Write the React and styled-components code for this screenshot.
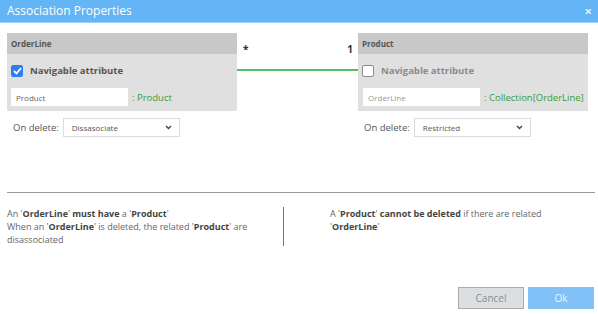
import React from 'react'
import styled, {createGlobalStyle} from 'styled-components'

const GlobalStyle = createGlobalStyle`
    html, body {
        margin: 0;
        padding: 0;
        background: #fff;
        font-family: "Open Sans", "Liberation Sans", sans-serif;
    }
`;

const Dialog = styled.div`
    width: 598px;
    height: 314px;
    display: flex;
    flex-direction: column;
    background: #fff;
    overflow: hidden;
`;

const TitleBar = styled.div`
    height: 22px;
    background: #64b5f6;
    display: flex;
    align-items: center;
    justify-content: space-between;
    padding: 0 6px 0 7px;
    color: #fff;
    border-bottom: 1px solid #9fd0f9;
`;

const Title = styled.div`
    font-size: 12px;
    line-height: 16px;
`;

const Close = styled.span`
    font-size: 13px;
    font-weight: bold;
    line-height: 13px;
    color: #e8f3fd;
`;

const Ends = styled.div`
    display: flex;
    align-items: flex-start;
    padding: 10px 10px 0 7px;
`;

const EndColumn = styled.div`
    width: 230px;
    flex-shrink: 0;
    display: flex;
    flex-direction: column;
`;

const Panel = styled.div`
    background: #e0e0e0;
    height: 78px;
`;

const PanelHeader = styled.div`
    height: 21px;
    background: #c8c8c8;
    display: flex;
    align-items: center;
    padding-left: 4px;
    font-size: 8px;
    font-weight: bold;
    color: #555;
`;

const CheckRow = styled.label`
    display: flex;
    align-items: center;
    gap: 7px;
    padding: 10px 0 0 4px;
    font-size: 9.5px;
    font-weight: bold;
    white-space: nowrap;
    color: ${props => props.dim ? '#8a8a8a' : '#555'};
`;

const Box = styled.span`
    width: 12px;
    height: 12px;
    border-radius: 2px;
    box-sizing: border-box;
    display: flex;
    align-items: center;
    justify-content: center;
    background: ${props => props.checked ? '#2f7df6' : '#fff'};
    border: 1px solid ${props => props.checked ? '#2f7df6' : '#8c8c8c'};
`;

const NameRow = styled.div`
    display: flex;
    align-items: center;
    gap: 4px;
    padding: 11px 0 0 ${props => props.inset}px;
`;

const NameInput = styled.div`
    width: 117px;
    height: 18px;
    flex-shrink: 0;
    background: #fff;
    box-sizing: border-box;
    padding-left: 5px;
    display: flex;
    align-items: center;
    font-size: 8px;
    color: ${props => props.dim ? '#999' : '#666'};
`;

const TypeText = styled.span`
    font-size: 9.5px;
    white-space: nowrap;
    color: #3a9c3a;
`;

const DeleteRow = styled.div`
    display: flex;
    align-items: center;
    gap: 4px;
    padding: 7px 0 0 6px;
    font-size: 9.5px;
    color: #555;
`;

const Select = styled.div`
    width: 117px;
    height: 19px;
    box-sizing: border-box;
    border: 1px solid #dcdcdc;
    background: #fff;
    display: flex;
    align-items: center;
    justify-content: space-between;
    padding: 0 7px 0 8px;
    font-size: 8px;
    color: #555;
`;

const Link = styled.div`
    flex: 1;
    display: flex;
    flex-direction: column;
`;

const Mult = styled.div`
    display: flex;
    justify-content: space-between;
    padding: 9px 5px 0 6px;
    height: 14px;
    font-size: 10px;
    font-weight: bold;
    color: #333;
`;

const GreenLine = styled.div`
    height: 2px;
    background: #4cc26c;
    margin-top: 13px;
`;

const Divider = styled.div`
    margin: 55px 3px 0 7px;
    height: 1px;
    background: #999;
`;

const Info = styled.div`
    display: flex;
    padding: 14px 0 0 7px;
    font-size: 9px;
    line-height: 13px;
    color: #666;

    b {
        color: #444;
    }
`;

const InfoLeft = styled.div`
    width: 268px;
    padding-right: 8px;
    border-right: 1px solid #777;
    min-height: 39px;
`;

const InfoRight = styled.div`
    padding-left: 46px;
    width: 260px;
`;

const Footer = styled.div`
    display: flex;
    justify-content: flex-end;
    gap: 4px;
    margin-top: auto;
    padding: 0 4px 5px 0;
`;

const Button = styled.div`
    width: 66px;
    height: 22px;
    box-sizing: border-box;
    display: flex;
    align-items: center;
    justify-content: center;
    font-size: 10px;
    background: ${props => props.primary ? '#81c1f7' : '#dcdfe2'};
    border: 1px solid ${props => props.primary ? '#81c1f7' : '#a9acaf'};
    color: ${props => props.primary ? '#eaf5ff' : '#8a8d90'};
`;

const Chevron = () => (
    <svg width="7" height="5" viewBox="0 0 7 5">
        <path d="M1 1 L3.5 3.5 L6 1" fill="none" stroke="#444" strokeWidth="1.4"/>
    </svg>
);

const Tick = () => (
    <svg width="9" height="8" viewBox="0 0 9 8">
        <path d="M1 4 L3.5 6.5 L8 1.2" fill="none" stroke="#fff" strokeWidth="1.8"/>
    </svg>
);

const End = (props) => (
    <EndColumn>
        <Panel>
            <PanelHeader>{props.entity}</PanelHeader>
            <CheckRow dim={!props.checked}>
                <Box checked={props.checked}>{props.checked && <Tick/>}</Box>
                Navigable attribute
            </CheckRow>
            <NameRow inset={props.inset}>
                <NameInput dim={!props.checked}>{props.name}</NameInput>
                <TypeText>: {props.type}</TypeText>
            </NameRow>
        </Panel>
        <DeleteRow>
            On delete:
            <Select>{props.onDelete}<Chevron/></Select>
        </DeleteRow>
    </EndColumn>
);

const App = () => {
    return (
        <Dialog>
            <GlobalStyle/>
            <TitleBar>
                <Title>Association Properties</Title>
                <Close>×</Close>
            </TitleBar>
            <Ends>
                <End entity="OrderLine" checked name="Product" type="Product" onDelete="Dissasociate" inset={4}/>
                <Link>
                    <Mult><span>*</span><span>1</span></Mult>
                    <GreenLine/>
                </Link>
                <End entity="Product" name="OrderLine" type="Collection[OrderLine]" onDelete="Restricted" inset={5}/>
            </Ends>
            <Divider/>
            <Info>
                <InfoLeft>
                    An '<b>OrderLine</b>' <b>must have</b> a '<b>Product</b>'<br/>
                    When an '<b>OrderLine</b>' is deleted, the related '<b>Product</b>' are<br/>
                    disassociated
                </InfoLeft>
                <InfoRight>
                    A '<b>Product</b>' <b>cannot be deleted</b> if there are related<br/>
                    '<b>OrderLine</b>'
                </InfoRight>
            </Info>
            <Footer>
                <Button>Cancel</Button>
                <Button primary>Ok</Button>
            </Footer>
        </Dialog>
    )
};

export default App;
